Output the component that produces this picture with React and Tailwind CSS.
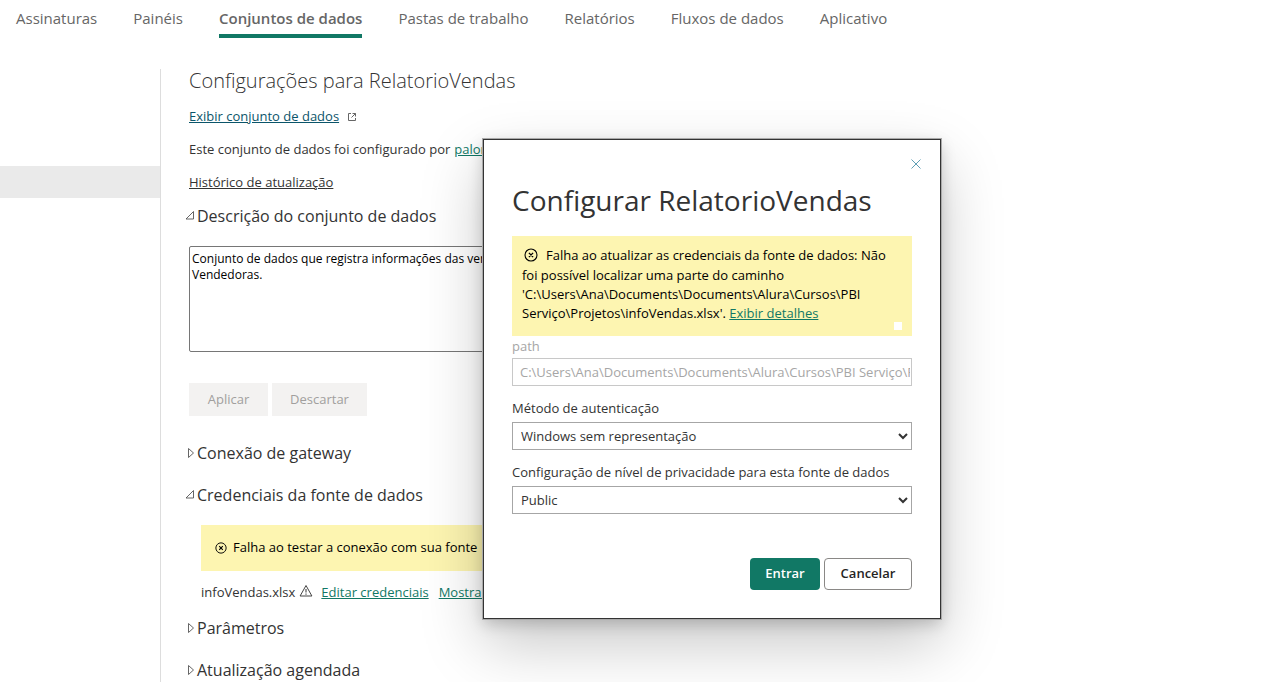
import React from 'react'

const tabs = [
  'Assinaturas',
  'Painéis',
  'Conjuntos de dados',
  'Pastas de trabalho',
  'Relatórios',
  'Fluxos de dados',
  'Aplicativo',
]

const ErrorIcon = ({ className = '' }) => (
  <svg viewBox="0 0 14 14" fill="none" stroke="currentColor" className={className} aria-hidden="true">
    <circle cx="7" cy="7" r="6" strokeWidth="1.1" />
    <path d="M4.9 4.9l4.2 4.2M9.1 4.9L4.9 9.1" strokeWidth="1.3" />
  </svg>
)

const WarningIcon = () => (
  <svg viewBox="0 0 14 14" fill="none" stroke="#444" className="mx-1 mb-1 h-3.5 w-3.5 shrink-0" aria-hidden="true">
    <path d="M7 1.5L12.9 12H1.1z" strokeWidth="1" strokeLinejoin="round" />
    <path d="M7 5v3.6M7 9.6v1.2" strokeWidth="1.1" />
  </svg>
)

const ExternalIcon = () => (
  <svg viewBox="0 0 10 10" fill="none" stroke="#666" className="h-2.5 w-2.5" aria-hidden="true">
    <path d="M4 1.5H1.5v7h7V6" />
    <path d="M5.5 1.5h3V4.5M8.5 1.5L4.5 5.5" />
  </svg>
)

const SectionTitle = ({ open = false, children }) => (
  <h2>
    <button type="button" aria-expanded={open} className="flex h-6 items-center text-base text-[#333]">
      <span className="flex w-3 justify-end pr-0.5">
        <svg viewBox="0 0 10 12" fill="none" stroke="#555" className="h-3 w-2.5 shrink-0" aria-hidden="true">
          {open ? <path d="M8.5 1.5v7.500H1z" strokeWidth="0.900" /> : <path d="M3.500 1.500v9L8.500 6z" strokeWidth="0.900" />}
        </svg>
      </span>
      {children}
    </button>
  </h2>
)

const SelectField = ({ id, label, value }) => (
  <div className="mt-3">
    <label htmlFor={id} className="block h-6 text-[13px] leading-5">{label}</label>
    <select id={id} defaultValue={value} className="h-7 w-full border border-[#a6a6a6] bg-white pl-1 text-[13px] text-[#333]">
      <option>{value}</option>
    </select>
  </div>
)

const ConfigDialog = () => (
  <div
    role="dialog"
    aria-labelledby="dialog-title"
    className="absolute left-[483px] top-[139px] w-[458px] border border-[#333] bg-white px-7 pb-7 text-[#333] shadow-[0_0_0_1px_#aaa,0_25px_58px_rgba(0,0,0,0.22),0_5px_14px_rgba(0,0,0,0.18)]"
  >
    <div className="-mr-4 flex justify-end pt-3">
      <button type="button" aria-label="Fechar" className="flex h-6 w-6 items-center justify-center">
        <svg viewBox="0 0 10 10" stroke="#5f9fb5" className="h-2.5 w-2.5" aria-hidden="true">
          <path d="M0.500 0.500l9 9M9.500 0.500l-9 9" />
        </svg>
      </button>
    </div>

    <h1 id="dialog-title" className="mt-1 text-[28px] leading-10">Configurar RelatorioVendas</h1>

    <div className="relative mt-4 h-[100px] bg-[#fdf5b1] px-2.5 pt-2.5 text-[13px] leading-[19px] text-black">
      <ErrorIcon className="mx-0.5 mb-1 mr-2 inline-block h-3.5 w-3.5" />
      Falha ao atualizar as credenciais da fonte de dados: Não foi possível localizar uma parte do caminho
      'C:\Users\Ana\Documents\Documents\Alura\Cursos\PBI Serviço\Projetos\infoVendas.xlsx'.{' '}
      <a href="#detalhes" className="text-[#117865] underline">Exibir detalhes</a>
      <span className="absolute bottom-1.5 right-2.5 h-2 w-2 bg-white" />
    </div>

    <label htmlFor="path" className="block h-[22px] text-[13px] leading-5 text-[#a6a6a6]">path</label>
    <input
      id="path"
      type="text"
      disabled
      defaultValue="C:\Users\Ana\Documents\Documents\Alura\Cursos\PBI Serviço\Projetos\infoVendas.xlsx"
      className="block h-7 w-full border border-[#c8c8c8] bg-white pl-[7px] pr-px text-[13px] text-[#a6a6a6]"
    />

    <SelectField id="auth" label="Método de autenticação" value="Windows sem representação" />
    <SelectField id="privacy" label="Configuração de nível de privacidade para esta fonte de dados" value="Public" />

    <div className="mt-11 flex justify-end gap-1 text-[13px] font-semibold">
      <button type="button" className="h-8 w-[70px] rounded bg-[#117865] text-white">Entrar</button>
      <button type="button" className="h-8 w-[88px] rounded border border-[#8a8886] text-[#252423]">Cancelar</button>
    </div>
  </div>
)

export default function App() {
  return (
    <div className="relative h-screen overflow-hidden bg-white font-['Open_Sans','Noto_Sans',sans-serif] text-[13px] text-[#333]">
      <div className="flex h-full flex-col">
        <nav className="flex gap-9 px-4 text-[15px] text-[#666]">
          {tabs.map((tab) => (
            <a
              key={tab}
              href="#tab"
              className={
                tab === 'Conjuntos de dados'
                  ? 'h-[38px] border-b-4 border-[#117865] pt-1.5 font-semibold leading-6'
                  : 'h-[38px] pt-1.5 leading-6'
              }
            >
              {tab}
            </a>
          ))}
        </nav>

        <div className="mt-[31px] flex min-h-0 flex-1">
          <aside className="w-[161px] shrink-0 border-r border-[#ddd] pt-[97px]">
            <div className="h-8 bg-[#eaeaea]" />
          </aside>

          <main className="min-w-0 flex-1 px-7">
            <h1 className="text-xl font-light leading-6">Configurações para RelatorioVendas</h1>
            <p className="mt-3 flex h-6 items-center gap-2">
              <a href="#dados" className="text-[#0b556a] underline">Exibir conjunto de dados</a>
              <ExternalIcon />
            </p>
            <p className="mt-[9px] flex h-6 items-center gap-1 whitespace-nowrap">
              Este conjunto de dados foi configurado por
              <a href="#autor" className="text-[#117865] underline">paloma</a>
            </p>
            <p className="mt-[9px] flex h-6 items-center">
              <a href="#historico" className="underline">Histórico de atualização</a>
            </p>

            <div className="-ml-1 mt-[9px]">
              <SectionTitle open>Descrição do conjunto de dados</SectionTitle>
            </div>
            <textarea
              aria-label="Descrição do conjunto de dados"
              className="mt-[18px] block h-[106px] w-[400px] resize-none rounded-xs border border-[#767676] px-0.5 py-1 text-xs leading-4 text-black"
              defaultValue={'Conjunto de dados que registra informações das vendas das\nVendedoras.'}
            />
            <div className="mt-[31px] flex gap-1 text-[#a19f9d]">
              <button type="button" disabled className="h-[33px] w-[79px] bg-[#f3f2f1]">Aplicar</button>
              <button type="button" disabled className="h-[33px] w-[95px] bg-[#f3f2f1]">Descartar</button>
            </div>

            <div className="-ml-1 mt-[25px] flex flex-col gap-[18px]">
              <SectionTitle>Conexão de gateway</SectionTitle>
              <SectionTitle open>Credenciais da fonte de dados</SectionTitle>
            </div>
            <div className="ml-3 mt-[18px]">
              <div className="flex h-[46px] w-[600px] max-w-full items-center gap-1.5 bg-[#fdf5b1] px-3.5 text-black">
                <ErrorIcon className="h-3 w-3 shrink-0" />
                Falha ao testar a conexão com sua fonte
              </div>
              <p className="mt-2.5 flex h-6 items-center whitespace-nowrap">
                infoVendas.xlsx
                <WarningIcon />
                <a href="#editar" className="ml-1 text-[#117865] underline">Editar credenciais</a>
                <a href="#mostrar" className="ml-2.5 text-[#117865] underline">Mostrar na</a>
              </p>
            </div>
            <div className="-ml-1 mt-[11px] flex flex-col gap-[18px]">
              <SectionTitle>Parâmetros</SectionTitle>
              <SectionTitle>Atualização agendada</SectionTitle>
            </div>
          </main>
        </div>
      </div>

      <ConfigDialog />
    </div>
  )
}
